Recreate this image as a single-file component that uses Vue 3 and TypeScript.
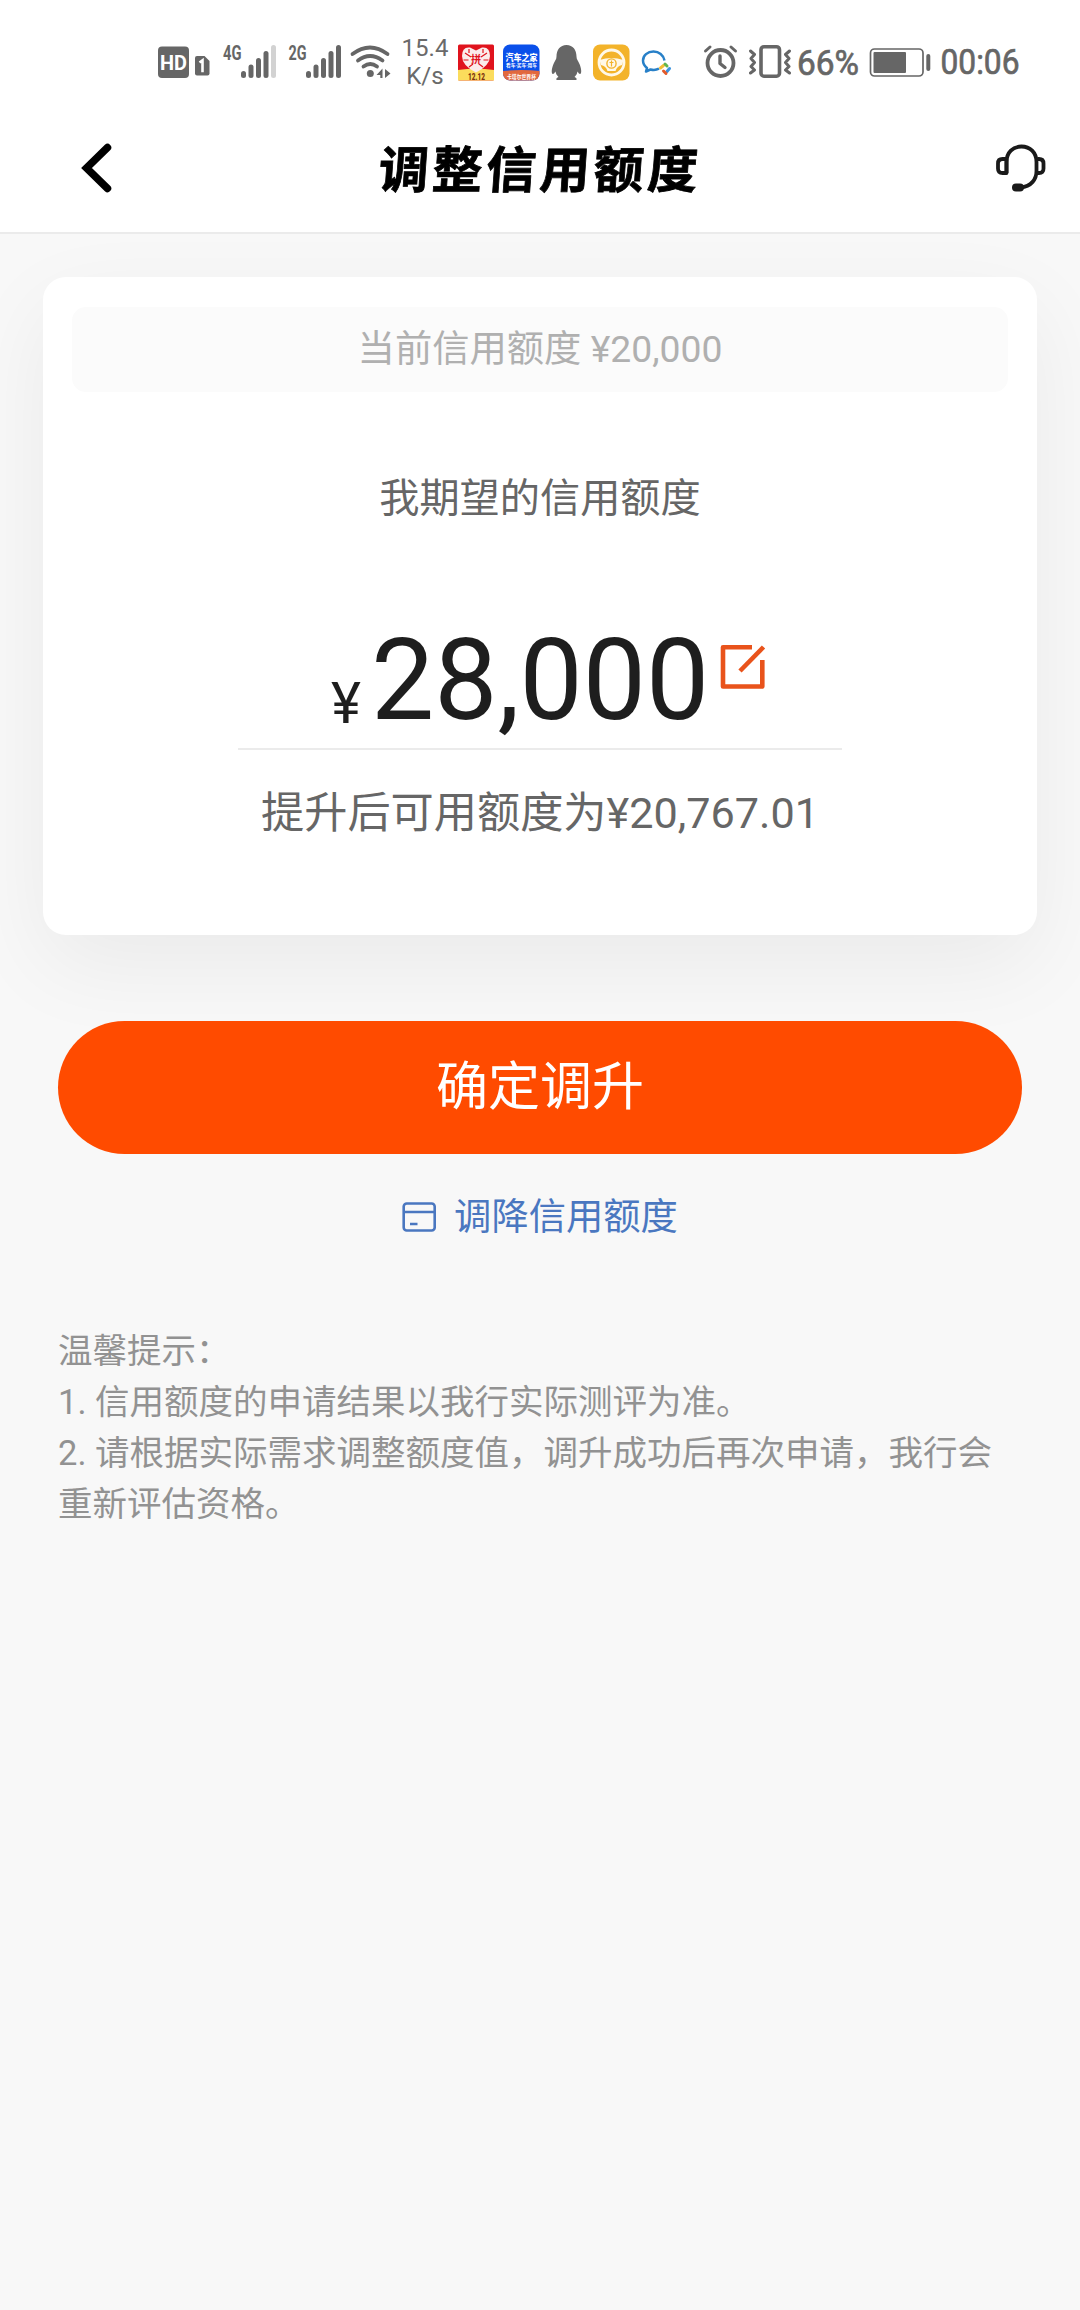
<script setup lang="ts">
import { ref } from 'vue'

interface SignalBar {
  x: number
  top: number
  faint?: boolean
}

const signalOne: SignalBar[] = [
  { x: 243.5, top: 73.5 },
  { x: 251, top: 67 },
  { x: 258.5, top: 60.5 },
  { x: 266, top: 53.5 },
  { x: 273.5, top: 47.5, faint: true },
]
const signalTwo: SignalBar[] = [
  { x: 308.5, top: 73.5 },
  { x: 316, top: 67 },
  { x: 323.5, top: 60.5 },
  { x: 331, top: 53.5 },
  { x: 338.5, top: 47.5 },
]

const currentLimit = ref('20,000')
const expectedLimit = ref('28,000')
const availableLimit = ref('20,767.01')

const tips: string[] = [
  '1. 信用额度的申请结果以我行实际测评为准。',
  '2. 请根据实际需求调整额度值，调升成功后再次申请，我行会重新评估资格。',
]
</script>

<template>
  <div class="page">
    <div class="status">
      <!-- HD and SIM -->
      <svg width="65" height="65" viewBox="150 30 65 65">
        <rect x="158" y="46.5" width="31" height="31.5" rx="4" fill="#666" />
        <text x="160" y="70" font-size="20" font-weight="700" fill="#fff" textLength="27" lengthAdjust="spacingAndGlyphs">HD</text>
        <path d="M197 56h7.500l5 5v12.500q0 2-2 2h-10.500q-2 0-2-2v-15.500q0-2 2-2z" fill="#666" />
        <path d="M199.500 62.500l3-2.200v12" fill="none" stroke="#fff" stroke-width="2.600" />
      </svg>
      <!-- 4G signal -->
      <svg width="65" height="65" viewBox="215 30 65 65">
        <text x="223" y="60" font-size="20" font-weight="700" fill="#666" textLength="18.500" lengthAdjust="spacingAndGlyphs">4G</text>
        <line v-for="b in signalOne" :key="b.x" :x1="b.x" :x2="b.x" :y1="b.top" y2="75.500" stroke-width="5" stroke-linecap="round" :stroke="b.faint ? '#d2d2d2' : '#666'" />
      </svg>
      <!-- 2G signal -->
      <svg width="68" height="65" viewBox="280 30 68 65">
        <text x="288.500" y="60" font-size="20" font-weight="700" fill="#666" textLength="18" lengthAdjust="spacingAndGlyphs">2G</text>
        <line v-for="b in signalTwo" :key="b.x" :x1="b.x" :x2="b.x" :y1="b.top" y2="75.500" stroke-width="5" stroke-linecap="round" stroke="#666" />
      </svg>
      <!-- Wi-Fi -->
      <svg width="52" height="65" viewBox="348 30 52 65">
        <g fill="none" stroke="#666" stroke-width="3.800" stroke-linecap="round">
          <path d="M352.500 54q17.500-13 35 0" />
          <path d="M358 60.500q12-9 24.500 0" />
          <path d="M363.500 66.500q6.800-5 13.500 0" />
        </g>
        <circle cx="370.300" cy="73.500" r="3.500" fill="#666" />
        <path d="M376.500 75l6-6.500v9.500h-2.200v-3zM385 69l5.500 4.500-5.500 4.500z" fill="#666" />
      </svg>
      <div class="speed"><span>15.4</span><span>K/s</span></div>
      <!-- Shopping app -->
      <svg width="48" height="65" viewBox="452 30 48 65">
        <rect x="458" y="44.500" width="36" height="36" rx="1.500" fill="#e0131d" />
        <path d="M458 70q18-3 36 0v10.500h-36z" fill="#fbdc5c" />
        <path d="M476 72.500q-14-7-14-16.500t8-8.500l6 3 6-3q8-1 8 8.500t-14 16.500z" fill="#fbeceb" />
        <path d="M465 53l6 4M487 53l-6 4M463.500 60h5M488.500 60h-5M469 67l4-3M483 67l-4-3M469 49v4M483 49v4" stroke="#e0131d" stroke-width="1.200" />
        <text x="471" y="62.500" font-size="10" font-weight="700" fill="#e0131d">拼</text>
        <text x="468" y="79.500" font-size="9" font-weight="900" fill="#7d3410" textLength="17" lengthAdjust="spacingAndGlyphs">12.12</text>
      </svg>
      <!-- Car portal app -->
      <svg width="46" height="65" viewBox="500 30 46 65">
        <clipPath id="car-clip"><rect x="503" y="44.500" width="36.500" height="36" rx="7" /></clipPath>
        <g clip-path="url(#car-clip)">
          <rect x="503" y="44" width="37" height="37" fill="#0a50ea" />
          <path d="M503 71q18-2 37 0v10h-37z" fill="#e2683d" />
        </g>
        <text x="505.500" y="60.500" font-size="9" font-weight="900" fill="#fff" textLength="32" lengthAdjust="spacingAndGlyphs">汽车之家</text>
        <text x="506" y="66.500" font-size="5" font-weight="700" fill="#fff" textLength="31" lengthAdjust="spacingAndGlyphs">看车·买车·用车</text>
        <text x="507" y="78.500" font-size="5.500" font-weight="700" fill="#fff" textLength="29" lengthAdjust="spacingAndGlyphs">卡塔尔世界杯</text>
      </svg>
      <!-- Penguin -->
      <svg width="41" height="65" viewBox="546 30 41 65">
        <path d="M566.500 45c-6.500 0-10 5-10 11.500 0 3-1.500 4-3 7.500-2 4.500-2.300 9.500-.8 10 1 .3 2-1.300 2.800-2.500.5 2.500 1.500 4 3 5.500-2 .8-3 2.500-1.500 3h9.500l9.500 0c1.500-.5.500-2.200-1.500-3 1.500-1.500 2.500-3 3-5.500.8 1.200 1.800 2.800 2.800 2.500 1.500-.5 1.200-5.500-.8-10-1.500-3.500-3-4.500-3-7.500 0-6.500-3.500-11.500-10-11.500z" fill="#666" />
      </svg>
      <!-- Driver app -->
      <svg width="49" height="65" viewBox="587 30 49 65">
        <rect x="593" y="44.500" width="36.500" height="36" rx="7" fill="#f3b32a" />
        <circle cx="611.500" cy="62.500" r="12.500" fill="none" stroke="#fff8e8" stroke-width="2.800" />
        <path d="M599.500 60q12-4 24 0l-1.500 5q-5 1-6.500 6h-8q-1.500-5-6.500-6z" fill="#fff8e8" />
        <circle cx="611.500" cy="63.500" r="4.600" fill="none" stroke="#f3b32a" stroke-width="1.400" />
        <path d="M609.500 62.500h4M611.500 60.500v6" stroke="#f3b32a" stroke-width="1.200" />
      </svg>
      <!-- Work chat -->
      <svg width="60" height="65" viewBox="636 30 60 65">
        <path d="M664.500 60.500c-1-5.500-5.500-9-11-9-6 0-10.500 4-10.500 9 0 3 1.500 5.500 4 7.500l-1 3.500 4.500-2c3 .8 6 .5 8.500-.8" fill="none" stroke="#2880c8" stroke-width="2.500" stroke-linejoin="round" />
        <g fill="none" stroke-width="3" stroke-linecap="round">
          <path d="M660.500 68l3-2.500" stroke="#f3bd34" />
          <path d="M665 64l2 2" stroke="#62b54e" />
          <path d="M669.500 68.500l-2.500 3" stroke="#3b93df" />
          <path d="M666 73.500l-2.500-2.500" stroke="#e45b2b" />
        </g>
      </svg>
      <!-- Alarm -->
      <svg class="alarm" width="46" height="65" viewBox="698 30 46 65">
        <g fill="none" stroke="#666" stroke-linecap="round" stroke-linejoin="round">
          <circle cx="720.500" cy="63" r="13" stroke-width="3.800" />
          <path d="M720 56v7.500l5 4" stroke-width="3.400" />
          <path d="M705.500 51l4.500-4M735.500 51l-4.500-4" stroke-width="3" />
        </g>
      </svg>
      <!-- Vibrate -->
      <svg width="52" height="65" viewBox="744 30 52 65">
        <g fill="none" stroke="#666" stroke-linecap="round" stroke-linejoin="round">
          <rect x="761" y="46.700" width="18.500" height="29.500" rx="3" stroke-width="3.600" />
          <path d="M750.500 51l4 3.500-3.500 4 3.500 4-3.500 4 3.500 3.500-4 3M789.500 51l-4 3.500 3.500 4-3.500 4 3.500 4-3.500 3.500 4 3" stroke-width="3" />
        </g>
      </svg>
      <svg width="68" height="65" viewBox="796 30 68 65">
        <text x="797" y="74.500" font-size="35" fill="#666" stroke="#666" stroke-width=".7" textLength="62" lengthAdjust="spacingAndGlyphs">66%</text>
      </svg>
      <!-- Battery -->
      <svg width="71" height="65" viewBox="864 30 71 65">
        <rect x="870.500" y="49" width="52.500" height="27" rx="4" fill="none" stroke="#666" stroke-width="1.700" />
        <rect x="873.500" y="52" width="32.500" height="21" rx="1" fill="#666" />
        <path d="M928.300 56v13" stroke="#666" stroke-width="4" stroke-linecap="round" />
      </svg>
      <svg width="110" height="65" viewBox="935 30 110 65">
        <text x="940.500" y="74" font-size="35" fill="#666" stroke="#666" stroke-width=".7" textLength="79" lengthAdjust="spacingAndGlyphs">00:06</text>
      </svg>
    </div>

    <header class="nav">
      <svg width="40" height="60" viewBox="75 138 40 60">
        <path d="M107.500 147.500L86.500 168l21 20.500" fill="none" stroke="#000" stroke-width="7.500" stroke-linecap="round" />
      </svg>
      <h1>调整信用额度</h1>
      <svg width="60" height="60" viewBox="990 138 60 60">
        <g fill="none" stroke="#1a1a1a" stroke-width="3.800" stroke-linejoin="round">
          <path d="M1006.500 173v-11c0-9.500 6.500-15.500 15-15.500s15 6 15 15.500v9c0 8-5 15.500-16 16.500" />
          <path d="M1006.500 159h-4q-4.500 0-4.500 4.500v5q0 4.500 4.500 4.500h4z" />
          <path d="M1037.500 159h1.500q4.500 0 4.500 4.500v5q0 4.500-4.500 4.500h-2.500" />
        </g>
        <rect x="1012" y="183.500" width="12" height="8" rx="4" fill="#1a1a1a" />
      </svg>
    </header>

    <main>
      <section class="card">
        <div class="current">当前信用额度 ¥{{ currentLimit }}</div>
        <div class="label">我期望的信用额度</div>
        <div class="amount">
          <span class="yen">¥</span>
          <span class="value">{{ expectedLimit }}</span>
          <svg class="edit" width="46" height="46" viewBox="721 644 46 46">
            <path d="M753 647.200h-29v39.300h39.300V660" fill="none" stroke="#e9531b" stroke-width="4.600" stroke-linejoin="round" />
            <path d="M741 671l23.500-24" stroke="#e9531b" stroke-width="4.600" />
          </svg>
        </div>
        <div class="after">提升后可用额度为¥{{ availableLimit }}</div>
      </section>

      <button class="confirm" type="button">确定调升</button>

      <a class="lower">
        <svg width="36" height="32" viewBox="401 1202 36 32">
          <rect x="402.700" y="1204.500" width="31" height="27" rx="3" fill="none" stroke="#4a77c0" stroke-width="2.600" />
          <path d="M403 1213h31M409 1225h7.500" stroke="#4a77c0" stroke-width="2.600" />
        </svg>
        <span>调降信用额度</span>
      </a>

      <div class="tips">
        <p>温馨提示：</p>
        <p v-for="tip in tips" :key="tip">{{ tip }}</p>
      </div>
    </main>
  </div>
</template>

<style>
body {
  background: #f8f8f8;
}
</style>

<style scoped>
.page {
  width: 1080px;
  height: 2310px;
  overflow: hidden;
  background: #f8f8f8;
  font-family: Roboto, "Noto Sans CJK SC", sans-serif;
}
.status {
  display: flex;
  height: 65px;
  padding: 30px 0 0 150px;
  background: #fff;
}
.status svg {
  display: block;
  flex: none;
}
.speed {
  display: flex;
  flex-direction: column;
  align-items: center;
  width: 50px;
  margin-right: 2px;
  padding-top: 5px;
  box-sizing: border-box;
  font-size: 24px;
  line-height: 27.500px;
  color: #6a6a6a;
}
.status .alarm {
  margin-left: 2px;
}
.nav {
  display: grid;
  grid-template-columns: 105px 1fr 105px;
  align-items: start;
  height: 139px;
  box-sizing: border-box;
  padding-top: 8px;
  background: #fff;
  border-bottom: 2px solid #ebebeb;
}
.nav svg {
  margin-top: 35px;
}
.nav svg:first-child {
  justify-self: end;
  margin-right: -10px;
}
.nav svg:last-child {
  margin-left: 15px;
}
.nav h1 {
  margin: 31px 0 0;
  font-size: 50px;
  line-height: 74px;
  font-weight: 700;
  letter-spacing: 3.800px;
  text-align: center;
  color: #000;
  -webkit-text-stroke: 0.8px #000;
  transform: skewX(-4deg);
}
main {
  padding: 43px 0 0;
}
.card {
  width: 994px;
  height: 658px;
  margin: 0 auto;
  padding-top: 30px;
  box-sizing: border-box;
  background: #fff;
  border-radius: 23px;
  box-shadow: 0 30px 90px rgba(0, 0, 0, 0.06);
  text-align: center;
}
.current {
  height: 85px;
  margin: 0 29px;
  border-radius: 14px;
  background: #fbfbfb;
  font-size: 37.300px;
  line-height: 84px;
  color: #b0b0b0;
}
.label {
  margin-top: 77px;
  font-size: 40.200px;
  line-height: 60px;
  color: #666;
}
.amount {
  display: flex;
  width: 604px;
  height: 221px;
  margin: 0 auto;
  box-sizing: border-box;
  border-bottom: 2px solid #ebebeb;
  color: #1e1e1e;
}
.yen {
  margin: 145px 0 0 93px;
  font-size: 57px;
  line-height: 60px;
}
.value {
  margin: 95px 0 0 10px;
  font-size: 112.500px;
  line-height: 114px;
}
.edit {
  margin: 115px 0 0 11px;
}
.after {
  margin-top: 34px;
  font-size: 43.200px;
  line-height: 60px;
  color: #666;
}
.confirm {
  display: block;
  width: 964px;
  height: 133px;
  margin: 86px auto 0;
  padding: 0;
  border: 0;
  border-radius: 67px;
  background: #ff4b00;
  font-family: inherit;
  font-size: 52px;
  line-height: 131px;
  color: #fff;
}
.lower {
  display: flex;
  align-items: center;
  justify-content: center;
  gap: 16px;
  height: 60px;
  margin-top: 33px;
  font-size: 37.300px;
  line-height: 60px;
  color: #4a77c0;
}
.tips {
  width: 942px;
  margin: 79px 0 0 58px;
  font-size: 34.500px;
  line-height: 51px;
  color: #929292;
}
.tips p {
  margin: 0;
}
</style>
